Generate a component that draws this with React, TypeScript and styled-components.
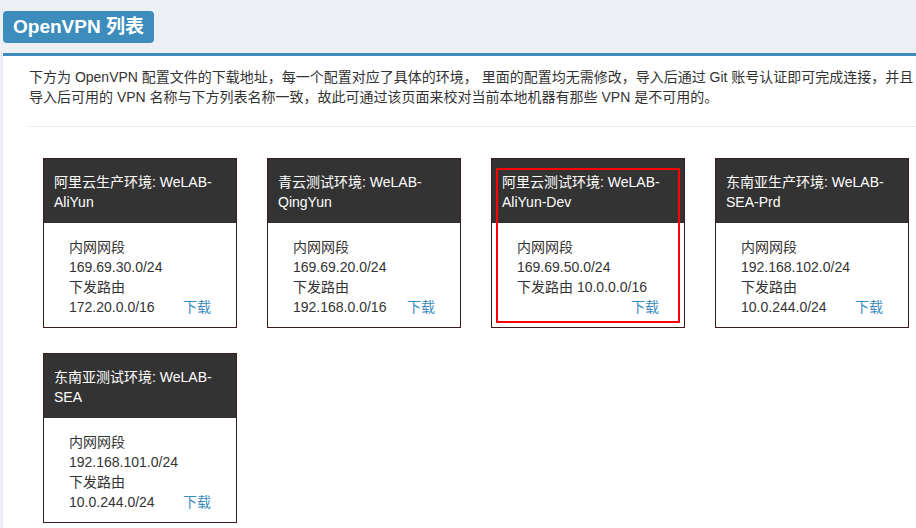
import React from "react";
import styled, { createGlobalStyle } from "styled-components";

const GlobalStyle = createGlobalStyle`
  html, body { margin: 0; padding: 0; background: #ecf0f5; }
  body {
    font-family: "Liberation Sans", "Noto Sans CJK SC", sans-serif;
    font-size: 14px;
    color: #333;
    overflow: hidden;
  }
`;

const Page = styled.div`
  padding: 11px 0 0 3px;
  height: 528px;
  box-sizing: border-box;
  overflow: hidden;
`;

const TitleBadge = styled.h1`
  display: inline-block;
  vertical-align: top;
  margin: 0 0 10px;
  padding: 0 10px;
  height: 32px;
  line-height: 32px;
  background: #3c8dbc;
  color: #fff;
  border-radius: 4px;
  font-size: 19px;
  font-weight: bold;
  font-family: "Liberation Sans", "Noto Sans CJK SC", sans-serif;
`;

const Panel = styled.section`
  background: #fff;
  border-top: 3px solid #3c8dbc;
  padding: 11px 0 40px 25px;
  min-height: 480px;
`;

const Description = styled.p`
  margin: 0 0 19px;
  line-height: 20px;
  padding-left: 1px;
  white-space: nowrap;
  color: #333;
`;

const Divider = styled.div`
  border-top: 1px solid #eee;
`;

const CardGrid = styled.div`
  display: grid;
  grid-template-columns: repeat(4, 194px);
  column-gap: 30px;
  row-gap: 25px;
  margin: 31px 0 0 15px;
`;

const Card = styled.div`
  position: relative;
  border: 1px solid #3d1c1c;
  background: #fff;
`;

const CardHeader = styled.div`
  background: #333;
  color: #fff;
  padding: 13px 10px 11px;
  line-height: 20px;
`;

const CardBody = styled.div`
  padding: 14px 25px 10px;
  line-height: 20px;
  color: #333;
  &::after { content: ""; display: block; clear: both; }
`;

const DownloadLink = styled.a`
  float: right;
  color: #3c8dbc;
  text-decoration: none;
`;

const Highlight = styled.div`
  position: absolute;
  left: 4px;
  top: 9px;
  width: 184px;
  height: 155px;
  border: 2px solid #f00;
  box-sizing: border-box;
  pointer-events: none;
`;

type Vpn = {
  name: string;
  subnet: string;
  route: string;
  highlight?: boolean;
};

const vpns: Vpn[] = [
  { name: "阿里云生产环境: WeLAB-AliYun", subnet: "169.69.30.0/24", route: "172.20.0.0/16" },
  { name: "青云测试环境: WeLAB-QingYun", subnet: "169.69.20.0/24", route: "192.168.0.0/16" },
  { name: "阿里云测试环境: WeLAB-AliYun-Dev", subnet: "169.69.50.0/24", route: "10.0.0.0/16", highlight: true },
  { name: "东南亚生产环境: WeLAB-SEA-Prd", subnet: "192.168.102.0/24", route: "10.0.244.0/24" },
  { name: "东南亚测试环境: WeLAB-SEA", subnet: "192.168.101.0/24", route: "10.0.244.0/24" },
];

export default function App() {
  return (
    <>
      <GlobalStyle />
      <Page>
        <TitleBadge>OpenVPN 列表</TitleBadge>
        <Panel>
          <Description>
            下方为 OpenVPN 配置文件的下载地址，每一个配置对应了具体的环境， 里面的配置均无需修改，导入后通过 Git 账号认证即可完成连接，并且
            <br />
            导入后可用的 VPN 名称与下方列表名称一致，故此可通过该页面来校对当前本地机器有那些 VPN 是不可用的。
          </Description>
          <Divider />
          <CardGrid>
            {vpns.map((v) => (
              <Card key={v.name}>
                <CardHeader>{v.name}</CardHeader>
                <CardBody>
                  内网网段
                  <br />
                  {v.subnet}
                  <br />
                  下发路由 {v.route}
                  <DownloadLink href="#">下载</DownloadLink>
                </CardBody>
                {v.highlight && <Highlight />}
              </Card>
            ))}
          </CardGrid>
        </Panel>
      </Page>
    </>
  );
}
